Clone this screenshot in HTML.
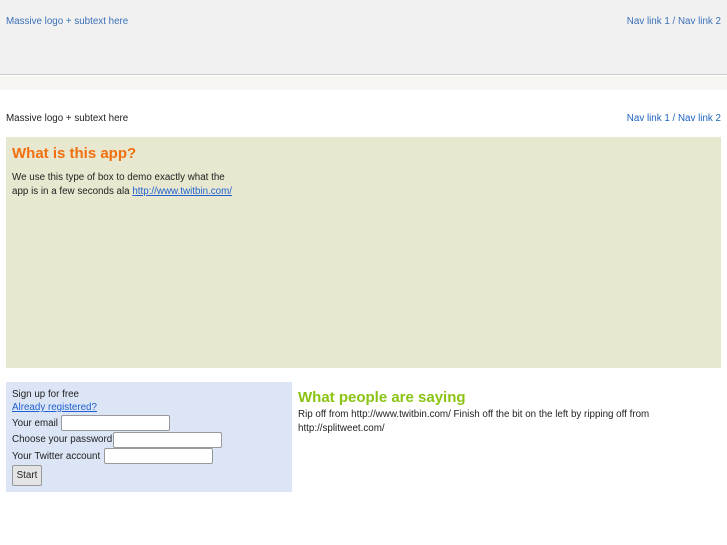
<!DOCTYPE html>
<html><head><style>
body{margin:0;width:727px;height:545px;background:#fff;font-family:"Liberation Sans",sans-serif;font-size:9.8px;color:#222;position:relative;overflow:hidden}
.a{position:absolute}
a{color:#1a62c0;text-decoration:none}
input{position:absolute;border:1px solid #999;border-radius:2px;background:#fff;padding:0;margin:0;box-sizing:border-box;height:16px}
</style></head><body>
<div class="a" style="left:0;top:0;width:727px;height:74px;background:#f1f1f1;border-bottom:1px solid #ccc"></div>
<div class="a" style="left:0;top:76px;width:727px;height:14px;background:#f7f6f3"></div>
<div class="a" style="left:6px;top:16px;color:#3a70b8">Massive logo + subtext here</div>
<div class="a" style="right:6px;top:16px;color:#3a70b8">Nav link 1 / Nav link 2</div>
<div class="a" style="left:6px;top:113px">Massive logo + subtext here</div>
<div class="a" style="right:6px;top:113px"><a>Nav link 1 / Nav link 2</a></div>
<div class="a" style="left:6px;top:137px;width:715px;height:231px;background:#e8e8d0"></div>
<div class="a" style="left:12px;top:145px;color:#f26f0f;font-weight:bold;font-size:15px">What is this app?</div>
<div class="a" style="left:12px;top:171px;line-height:14px">We use this type of box to demo exactly what the<br>app is in a few seconds ala <a style="text-decoration:underline;color:#2060d0">http://www.twitbin.com/</a></div>
<div class="a" style="left:6px;top:382px;width:286px;height:110px;background:#dbe5f5"></div>
<div class="a" style="left:12px;top:389px">Sign up for free</div>
<div class="a" style="left:12px;top:402px"><a style="text-decoration:underline;color:#2060d0">Already registered?</a></div>
<div class="a" style="left:12px;top:418px">Your email</div>
<input style="left:61px;top:415px;width:109px">
<div class="a" style="left:12px;top:434px">Choose your password</div>
<input style="left:113px;top:432px;width:109px">
<div class="a" style="left:12px;top:451px">Your Twitter account</div>
<input style="left:104px;top:448px;width:109px">
<div class="a" style="left:12px;top:465px;width:30px;height:21px;border:1px solid #999;border-radius:2px;background:#e4e4e4;box-sizing:border-box;text-align:center;line-height:19px">Start</div>
<div class="a" style="left:298px;top:389px;color:#8bc313;font-weight:bold;font-size:15px">What people are saying</div>
<div class="a" style="left:298px;top:408px;line-height:14px">Rip off from http://www.twitbin.com/ Finish off the bit on the left by ripping off from<br>http://splitweet.com/</div>
</body></html>
